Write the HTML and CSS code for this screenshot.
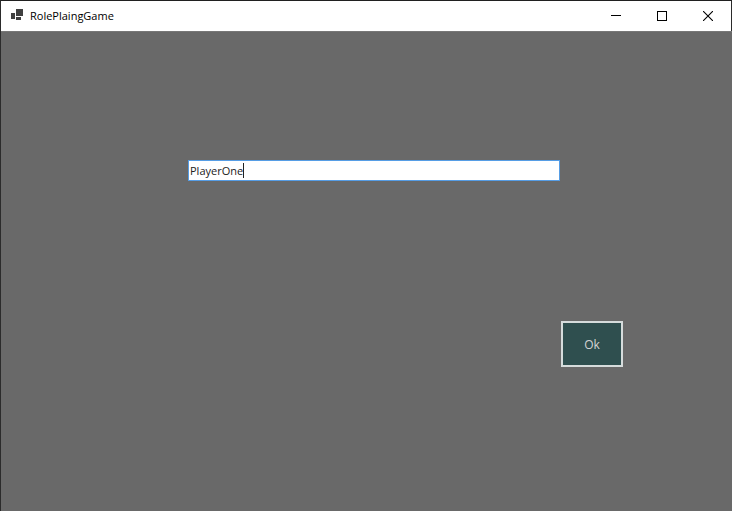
FILE: index.html
```html
<!DOCTYPE html>
<html lang="en">
<head>
<meta charset="utf-8">
<meta name="viewport" content="width=device-width, initial-scale=1">
<title>RolePlaingGame</title>
<link rel="stylesheet" href="styles.css">
</head>
<body>
<div class="window">
  <header class="titlebar">
    <svg class="app-icon" width="12" height="14" viewBox="0 0 12 14" fill="#404040" shape-rendering="crispEdges" aria-hidden="true">
      <path d="M5 0h7v7H5zM0 4h4v6H0zM5 8h5v3H5z"/>
    </svg>
    <h1 class="title">RolePlaingGame</h1>
    <div class="controls">
      <button class="control" type="button" aria-label="Minimize">
        <svg width="10" height="10" viewBox="0 0 10 10" shape-rendering="crispEdges"><path d="M0 4h10v1H0z"/></svg>
      </button>
      <button class="control" type="button" aria-label="Maximize">
        <svg width="10" height="10" viewBox="0 0 10 10" shape-rendering="crispEdges"><path d="M0 0h10v10H0zM1 1v8h8V1z" fill-rule="evenodd"/></svg>
      </button>
      <button class="control" type="button" aria-label="Close">
        <svg width="10" height="10" viewBox="0 0 10 10"><path d="M0 0L10 10M10 0L0 10" fill="none" stroke="#000" stroke-width="1.1"/></svg>
      </button>
    </div>
  </header>
  <main class="content">
    <form class="name-form">
      <div class="field">
        <input class="name-input" type="text" value="PlayerOne" aria-label="Player name">
        <span class="caret"></span>
      </div>
      <button class="ok" type="button">Ok</button>
    </form>
  </main>
</div>
</body>
</html>
```
FILE: styles.css
```css
* {
  box-sizing: border-box;
}

body {
  margin: 0;
  font-family: "Open Sans", "Noto Sans", sans-serif;
  font-size: 11px;
}

.window {
  display: flex;
  flex-direction: column;
  min-height: 100vh;
  border-top: 1px solid #202020;
  border-left: 1px solid #2b2b2b;
  background: #696969;
}

.titlebar {
  display: flex;
  align-items: center;
  height: 30px;
  padding-left: 10px;
  border-right: 1px solid #2b2b2b;
  background: #fff;
}

.app-icon {
  flex: none;
}

.title {
  flex: 1;
  margin: 0 0 0 7px;
  font-size: 11px;
  font-weight: 400;
  line-height: 16px;
  color: #000;
}

.controls {
  display: flex;
}

.control {
  display: flex;
  align-items: center;
  justify-content: center;
  width: 46px;
  height: 30px;
  padding: 0;
  border: 0;
  background: none;
}

.content {
  flex: 1;
  border-top: 1px solid #777;
}

.name-form {
  display: grid;
  grid-template-columns: 187fr 373fr 62fr 109fr;
  row-gap: 140px;
  padding-top: 128px;
}

.field {
  position: relative;
  grid-column: 2;
  margin-right: 1px;
}

.name-input {
  display: block;
  width: 100%;
  height: 21px;
  padding: 0 1px;
  border: 1px solid #569de5;
  border-radius: 0;
  outline: 0;
  background: #fff;
  color: #222;
  font: inherit;
}

.caret {
  position: absolute;
  top: 3px;
  left: 55px;
  width: 1px;
  height: 15px;
  background: #222;
}

.ok {
  grid-column: 3;
  grid-row: 2;
  height: 46px;
  padding: 0;
  border: 2px solid #d6dcdc;
  border-radius: 0;
  background: #2f4f4f;
  color: #d3d3d3;
  font: inherit;
  font-size: 12px;
}
```
